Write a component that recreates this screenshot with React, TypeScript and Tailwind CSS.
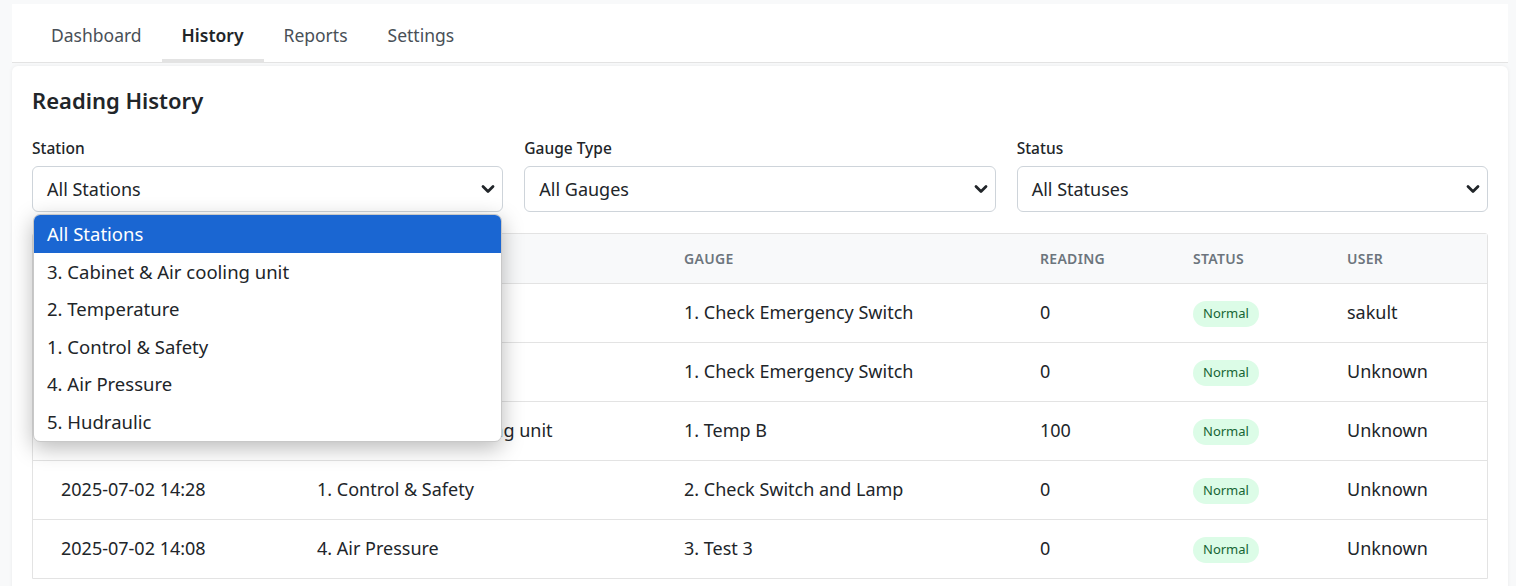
import React from 'react';

interface Reading {
  time: string;
  station: string;
  gauge: string;
  value: string;
  status: string;
  user: string;
}

const rows: Reading[] = [
  { time: '2025-07-02 15:12', station: '1. Control & Safety', gauge: '1. Check Emergency Switch', value: '0', status: 'Normal', user: 'sakult' },
  { time: '2025-07-02 14:52', station: '1. Control & Safety', gauge: '1. Check Emergency Switch', value: '0', status: 'Normal', user: 'Unknown' },
  { time: '2025-07-02 14:40', station: '3. Cabinet & Air cooling unit', gauge: '1. Temp B', value: '100', status: 'Normal', user: 'Unknown' },
  { time: '2025-07-02 14:28', station: '1. Control & Safety', gauge: '2. Check Switch and Lamp', value: '0', status: 'Normal', user: 'Unknown' },
  { time: '2025-07-02 14:08', station: '4. Air Pressure', gauge: '3. Test 3', value: '0', status: 'Normal', user: 'Unknown' },
];

const stationOptions = [
  'All Stations',
  '3. Cabinet & Air cooling unit',
  '2. Temperature',
  '1. Control & Safety',
  '4. Air Pressure',
  '5. Hudraulic',
];

const Chevron = () => (
  <svg width="14" height="10" viewBox="0 0 14 10" className="text-[#212529]">
    <polyline points="2,2.5 7,7.5 12,2.5" fill="none" stroke="currentColor" strokeWidth="2.8" strokeLinecap="round" strokeLinejoin="round" />
  </svg>
);

const FakeSelect: React.FC<{ label: string; value: string; children?: React.ReactNode }> = ({ label, value, children }) => (
  <div className="relative flex-1">
    <div className="text-[15.5px] font-medium text-[#212529] mb-[8px] pt-[1px] leading-[20px]">{label}</div>
    <div className="h-[46px] border border-[#ced4da] rounded-[6px] bg-white flex items-center justify-between pl-[14px] pr-[7px]">
      <span className="text-[18px] text-[#212529]">{value}</span>
      <Chevron />
    </div>
    {children}
  </div>
);

const App: React.FC = () => {
  const tabs = ['Dashboard', 'History', 'Reports', 'Settings'];

  return (
    <div className="min-h-screen bg-[#f8f9fa] pl-3 pr-2 pt-1 font-['Noto_Sans',sans-serif] text-[#212529]">
      {/* tab bar */}
      <div className="bg-white h-[59px] border-b border-[#e3e3e3] flex items-stretch pl-[19px]">
        {tabs.map((t) => (
          <div
            key={t}
            className={
              'px-5 flex items-center pt-[8px] text-[17.5px] ' +
              (t === 'History'
                ? 'font-semibold text-[#212529] border-b-[3px] border-[#e3e3e3]'
                : 'text-[#495057] pb-[3px]')
            }
          >
            {t}
          </div>
        ))}
      </div>

      {/* card */}
      <div className="mt-[3px] bg-white rounded-t-[6px] shadow-[0_0_4px_rgba(0,0,0,0.06)] px-5 pt-[19px] pb-6">
        <h2 className="text-[22px] font-semibold leading-[30px] mb-[22px]">Reading History</h2>

        <div className="flex gap-[21px]">
          <FakeSelect label="Station" value="All Stations">
            <div className="absolute left-[1px] right-[1px] top-[77px] z-10 bg-white rounded-[7px] overflow-hidden shadow-[0_6px_22px_rgba(0,0,0,0.28)] border border-[#c8c8c8]">
              {stationOptions.map((o, i) => (
                <div
                  key={o}
                  className={
                    'h-[37.6px] flex items-center pl-[13px] text-[18.5px] ' +
                    (i === 0 ? 'bg-[#1a66d2] text-white' : 'text-[#212529]')
                  }
                >
                  {o}
                </div>
              ))}
            </div>
          </FakeSelect>
          <FakeSelect label="Gauge Type" value="All Gauges" />
          <FakeSelect label="Status" value="All Statuses" />
        </div>

        <div className="mt-[21px] border border-[#e3e3e3] rounded-t-[3px]">
          <table className="w-full border-collapse text-left">
            <thead>
              <tr className="bg-[#f8f9fa] h-[49px] text-[14px] font-semibold text-[#6c757d] uppercase tracking-[0.3px]">
                <th className="pl-[28px] w-[284px] font-semibold">Date/Time</th>
                <th className="w-[367px] font-semibold">Station</th>
                <th className="w-[356px] font-semibold">Gauge</th>
                <th className="w-[153px] font-semibold">Reading</th>
                <th className="w-[154px] font-semibold">Status</th>
                <th className="font-semibold">User</th>
              </tr>
            </thead>
            <tbody>
              {rows.map((r, i) => (
                <tr key={i} className="h-[59px] border-t border-[#e3e3e3] text-[18px]">
                  <td className="pl-[28px]">{r.time}</td>
                  <td>{r.station}</td>
                  <td>{r.gauge}</td>
                  <td>{r.value}</td>
                  <td>
                    <span className="inline-flex items-center h-[26px] px-[10px] rounded-full bg-[#dcfce7] text-[#166534] text-[13px]">
                      {r.status}
                    </span>
                  </td>
                  <td>{r.user}</td>
                </tr>
              ))}
            </tbody>
          </table>
        </div>
      </div>
    </div>
  );
};

export default App;
